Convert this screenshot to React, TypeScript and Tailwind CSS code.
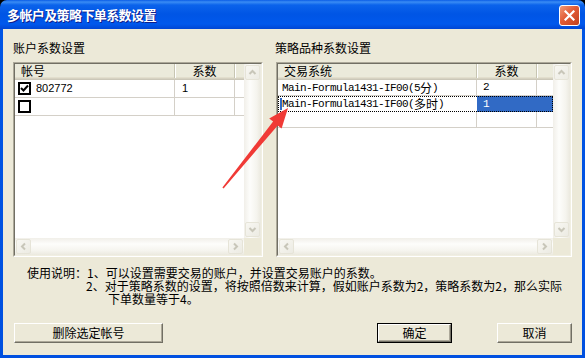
import React from 'react';

type Dir = 'up' | 'down' | 'left' | 'right';

function Chevron({ dir }: { dir: Dir }) {
  const d = {
    up: 'M1.5 6 L4.5 3 L7.5 6',
    down: 'M1.5 3 L4.5 6 L7.5 3',
    left: 'M6 1.5 L3 4.5 L6 7.5',
    right: 'M3 1.5 L6 4.5 L3 7.5',
  }[dir];
  return (
    <svg width="9" height="9" viewBox="0 0 9 9">
      <path d={d} fill="none" stroke="#c8c6b9" strokeWidth="2" />
    </svg>
  );
}

function SBtn({ dir }: { dir: Dir }) {
  return (
    <div className="w-[15px] h-[15px] m-px rounded-[2px] border border-[#e6e4d8] bg-[linear-gradient(135deg,#f8f7f2,#ecebe3)] flex items-center justify-center">
      <Chevron dir={dir} />
    </div>
  );
}

function VScroll() {
  return (
    <div className="w-[17px] flex flex-col justify-between bg-[linear-gradient(to_right,#f1efe9,#fdfdfb_35%,#f5f4ee_75%,#ebe9df)]">
      <SBtn dir="up" />
      <SBtn dir="down" />
    </div>
  );
}

function HScroll() {
  return (
    <div className="flex-1 h-[17px] flex justify-between bg-[linear-gradient(to_bottom,#f1efe9,#fdfdfb_35%,#f5f4ee_75%,#ebe9df)]">
      <SBtn dir="left" />
      <SBtn dir="right" />
    </div>
  );
}

function Panel({ children }: { children: React.ReactNode }) {
  return (
    <div className="h-[195px] border border-t-[#aca899] border-l-[#aca899] border-r-white border-b-white">
      <div className="h-full border border-t-[#716f64] border-l-[#716f64] border-r-[#f1efe2] border-b-[#f1efe2] flex flex-col bg-white">
        <div className="flex-1 flex min-h-0">
          <div className="flex-1 min-w-0">{children}</div>
          <VScroll />
        </div>
        <div className="flex h-[17px]">
          <HScroll />
          <div className="w-[17px] bg-[#ece9d8]" />
        </div>
      </div>
    </div>
  );
}

function HeaderCell({ w, children, center }: { w?: string; children?: React.ReactNode; center?: boolean }) {
  return (
    <div
      className={`${w ?? 'flex-1'} h-full flex items-center border-r border-r-[#c7c5b2] shadow-[1px_0_0_#ffffff] leading-[14px] ${center ? 'justify-center' : 'pl-[6px]'}`}
    >
      {children}
    </div>
  );
}

function Header({ children }: { children: React.ReactNode }) {
  return (
    <div className="flex h-[16px] bg-[#ebeadb] shadow-[inset_0_-1px_#cbc7b8,inset_0_-2px_#d6d2c2,inset_0_-3px_#e2decd] pb-[2px]">
      {children}
    </div>
  );
}

function CheckBox({ checked }: { checked?: boolean }) {
  return (
    <div className="w-[13px] h-[13px] border-2 border-black bg-white flex items-center justify-center shrink-0">
      {checked && (
        <svg width="9" height="9" viewBox="0 0 9 9">
          <path d="M1 4 L3.5 6.5 L8 1.5" fill="none" stroke="#000" strokeWidth="2" />
        </svg>
      )}
    </div>
  );
}

function Mono({ children }: { children: React.ReactNode }) {
  return <span className="font-['Liberation_Mono',monospace] text-[11px] tracking-[-0.6px]">{children}</span>;
}

function Btn({ children, def, w }: { children: React.ReactNode; def?: boolean; w: string }) {
  const inner = (
    <div className="h-full w-full bg-[#ece9d8] border border-t-white border-l-white border-r-[#716f64] border-b-[#716f64] shadow-[inset_-1px_-1px_#aca899] flex items-center justify-center text-[12px] leading-[14px] text-black">
      {children}
    </div>
  );
  return def ? (
    <div className={`${w} h-[20px] border border-black`}>{inner}</div>
  ) : (
    <div className={`${w} h-[20px]`}>{inner}</div>
  );
}

export default function App() {
  return (
    <div className="w-[585px] h-[358px] bg-black relative font-['Noto_Sans_CJK_SC','Liberation_Sans',sans-serif] text-[12px] text-black">
      <div className="w-full h-full rounded-t-[7px] bg-[linear-gradient(to_bottom,#0b5de6_0px,#3a8cf4_2px,#0b63eb_5px,#0055e5_14px,#0058ec_24px,#0046d4_29px,#0055e5_30px,#0050e0_100%)] flex flex-col">
        {/* title bar */}
        <div className="h-[29px] flex items-center pl-[7px] pr-[5px] shrink-0">
          <div className="flex-1 text-white font-bold text-[13px] tracking-[-0.6px] [text-shadow:1px_1px_0_#0f1e8a] leading-[14px]">
            多帐户及策略下单系数设置
          </div>
          <div className="w-[21px] h-[21px] mt-[2px] rounded-[3px] border border-white bg-[linear-gradient(135deg,#f19a77,#e25b35_45%,#c2401d)] flex items-center justify-center">
            <svg width="11" height="11" viewBox="0 0 11 11">
              <path d="M1.5 1.5 L9.5 9.5 M9.5 1.5 L1.5 9.5" stroke="#fff" strokeWidth="2.2" strokeLinecap="square" />
            </svg>
          </div>
        </div>
        {/* body */}
        <div className="flex-1 mx-[3px] mb-[3px] bg-[#ece9d8] px-[10px] pt-[12px] flex flex-col">
          <div className="flex gap-[13px]">
            <div className="w-[250px] flex flex-col">
              <div className="h-[21px] leading-[14px]">账户系数设置</div>
              <Panel>
                <Header>
                  <HeaderCell w="w-[160px]">帐号</HeaderCell>
                  <HeaderCell w="w-[60px]" center>系数</HeaderCell>
                  <div className="flex-1" />
                </Header>
                <div>
                  <div className="flex h-[18px] border-b border-[#d4d0c8]">
                    <div className="w-[160px] border-r border-[#d4d0c8] flex items-center pl-[3px] gap-[5px]">
                      <CheckBox checked />
                      <span className="font-['Liberation_Sans',sans-serif] text-[11px]">802772</span>
                    </div>
                    <div className="w-[60px] border-r border-[#d4d0c8] flex items-center pl-[7px] font-['Liberation_Sans',sans-serif] text-[11px]">
                      1
                    </div>
                    <div className="flex-1" />
                  </div>
                  <div className="flex h-[18px] border-b border-[#d4d0c8]">
                    <div className="w-[160px] border-r border-[#d4d0c8] flex items-center pl-[3px]">
                      <CheckBox />
                    </div>
                    <div className="w-[60px] border-r border-[#d4d0c8]" />
                    <div className="flex-1" />
                  </div>
                </div>
              </Panel>
            </div>
            <div className="w-[296px] flex flex-col">
              <div className="h-[21px] leading-[14px] -ml-[1px]">策略品种系数设置</div>
              <Panel>
                <Header>
                  <HeaderCell w="w-[199px]">交易系统</HeaderCell>
                  <HeaderCell w="w-[60px]" center>系数</HeaderCell>
                  <div className="flex-1" />
                </Header>
                <div>
                  <div className="flex h-[16px] border-b border-[#d4d0c8]">
                    <div className="w-[199px] border-r border-[#d4d0c8] flex items-center pl-[4px] whitespace-nowrap leading-[14px]">
                      <Mono>Main-Formula1431-IF00(5</Mono>
                      <span>分</span>
                      <Mono>)</Mono>
                    </div>
                    <div className="w-[60px] border-r border-[#d4d0c8] flex items-center pl-[6px]">
                      <Mono>2</Mono>
                    </div>
                    <div className="flex-1" />
                  </div>
                  <div className="flex h-[16px] relative">
                    <div className="w-[199px] flex items-center pl-[4px] whitespace-nowrap leading-[14px]">
                      <Mono>Main-Formula1431-IF00(</Mono>
                      <span>多时</span>
                      <Mono>)</Mono>
                    </div>
                    <div className="flex-1 bg-[#316ac5] text-white flex items-center pl-[6px]">
                      <Mono>1</Mono>
                    </div>
                    <div className="absolute left-[2px] top-[2px] w-[2px] h-[12px] bg-[#316ac5]" />
                    <div className="absolute inset-0 border border-dotted border-black pointer-events-none" />
                  </div>
                  <div className="flex h-[16px] border-b border-[#d4d0c8]">
                    <div className="w-[199px] border-r border-[#d4d0c8]" />
                    <div className="w-[60px] border-r border-[#d4d0c8]" />
                    <div className="flex-1" />
                  </div>
                </div>
              </Panel>
            </div>
          </div>
          <div className="mt-[9px] pl-[14px] leading-[13px] whitespace-nowrap">
            <div>使用说明：1、可以设置需要交易的账户，并设置交易账户的系数。</div>
            <div className="pl-[59px]">2、对于策略系数的设置，将按照倍数来计算，假如账户系数为2，策略系数为2，那么实际</div>
            <div className="pl-[81px]">下单数量等于4。</div>
          </div>
          <div className="mt-[18px] flex items-start">
            <div className="ml-[1px]">
              <Btn w="w-[149px]">删除选定帐号</Btn>
            </div>
            <div className="flex-1" />
            <Btn w="w-[75px]" def>
              确定
            </Btn>
            <div className="w-[45px]" />
            <Btn w="w-[75px]">取消</Btn>
          </div>
        </div>
      </div>
      {/* red arrow annotation */}
      <svg className="absolute left-0 top-0 pointer-events-none" width="585" height="358" viewBox="0 0 585 358">
        <polygon
          points="222.4,187.6 273.1,121.6 269.2,118.5 288,108 281.6,128.5 277.7,125.4 223.6,188.4"
          fill="#f03a36"
        />
      </svg>
    </div>
  );
}
